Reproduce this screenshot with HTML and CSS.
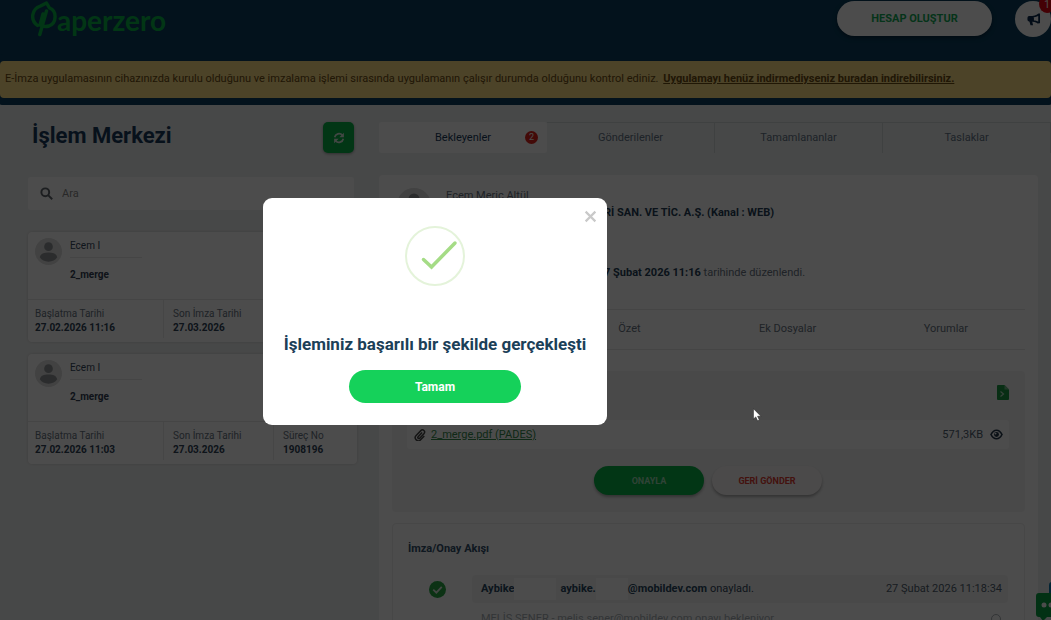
FILE: index.html
```html
<!DOCTYPE html>
<html lang="tr">
<head>
<meta charset="utf-8">
<meta name="viewport" content="width=device-width, initial-scale=1">
<title>Paperzero</title>
<link rel="stylesheet" href="styles.css">
</head>
<body>
<div class="page">
  <header class="topbar">
    <a class="logo" href="#" aria-label="Paperzero">
      <svg class="logo-mark" viewBox="0 0 26 37" aria-hidden="true">
        <path d="M6.500 25.500C-1 20 .5 9 9.500 6L15.500 3L18.500 8C26.500 11 25.500 23.500 18 26Q14.500 27 11.500 26M15.500 11L8.800 34.500M9 25L12 14"/>
      </svg>
      <span class="logo-text">aperzero</span>
    </a>
    <div class="topbar-actions">
      <button class="account-btn" type="button">HESAP OLUŞTUR</button>
      <button class="news-btn" type="button" aria-label="Duyurular">
        <svg viewBox="0 0 16 16" aria-hidden="true"><path d="M14 1.500v10.600M13.500 2.500C11 5 8 5.200 3.500 5.200a1 1 0 0 0-1 1v2a1 1 0 0 0 1 1C8 9.200 11 9.600 13.500 11.800M7.500 5v4.200" fill="none" stroke="currentColor" stroke-width="1.900"/><path d="M2.500 5h5v4.500h-1l1 4.500H4.800L3.500 9.500h-1z" fill="currentColor"/></svg>
        <span class="news-count">1</span>
      </button>
    </div>
  </header>
  <p class="notice">E-İmza uygulamasının cihazınızda kurulu olduğunu ve imzalama işlemi sırasında uygulamanın çalışır durumda olduğunu kontrol ediniz. <a href="#">Uygulamayı henüz indirmediyseniz buradan indirebilirsiniz.</a></p>

  <div class="workspace">
    <aside class="sidebar">
      <div class="sidebar-head">
        <h1>İşlem Merkezi</h1>
        <button class="refresh-btn" type="button" aria-label="Yenile">
          <svg viewBox="0 0 16 16" aria-hidden="true"><path d="M2.200 7A6 6 0 0 1 12.500 4.200M13.800 9A6 6 0 0 1 3.500 11.800" fill="none" stroke="currentColor" stroke-width="2.200"/><path d="M14.500 1v6h-6zM1.500 15V9h6z" fill="currentColor"/></svg>
        </button>
      </div>
      <label class="search">
        <svg viewBox="0 0 16 16" aria-hidden="true"><circle cx="6.500" cy="6.500" r="4.800"/><path d="M10 10l5 5"/></svg>
        <input type="text" placeholder="Ara" aria-label="Ara">
      </label>

      <article class="job">
        <div class="job-top">
          <svg class="avatar" viewBox="0 0 28 28" aria-hidden="true"><circle cx="14" cy="14" r="14" fill="#dcdcdc"/><circle cx="14" cy="9" r="4.500" fill="#909497"/><path d="M5 20c1-4 4-5 9-5s8 1 9 5c-2 3-5 4.500-9 4.500S7 23 5 20z" fill="#909497"/></svg>
          <div class="job-info"><span class="job-person">Ecem I</span><strong>2_merge</strong></div>
        </div>
        <dl class="job-meta">
          <div><dt>Başlatma Tarihi</dt><dd>27.02.2026 11:16</dd></div>
          <div><dt>Son İmza Tarihi</dt><dd>27.03.2026</dd></div>
          <div></div>
        </dl>
      </article>

      <article class="job">
        <div class="job-top">
          <svg class="avatar" viewBox="0 0 28 28" aria-hidden="true"><circle cx="14" cy="14" r="14" fill="#dcdcdc"/><circle cx="14" cy="9" r="4.500" fill="#909497"/><path d="M5 20c1-4 4-5 9-5s8 1 9 5c-2 3-5 4.500-9 4.500S7 23 5 20z" fill="#909497"/></svg>
          <div class="job-info"><span class="job-person">Ecem I</span><strong>2_merge</strong></div>
        </div>
        <dl class="job-meta">
          <div><dt>Başlatma Tarihi</dt><dd>27.02.2026 11:03</dd></div>
          <div><dt>Son İmza Tarihi</dt><dd>27.03.2026</dd></div>
          <div><dt>Süreç No</dt><dd>1908196</dd></div>
        </dl>
      </article>
    </aside>

    <main class="main">
      <nav class="tabs">
        <button class="tab tab-active" type="button">Bekleyenler<span class="tab-count">2</span></button>
        <button class="tab" type="button">Gönderilenler</button>
        <button class="tab" type="button">Tamamlananlar</button>
        <button class="tab" type="button">Taslaklar</button>
      </nav>

      <section class="panel">
        <div class="sender">
          <svg class="avatar avatar-lg" viewBox="0 0 28 28" aria-hidden="true"><circle cx="14" cy="14" r="14" fill="#dcdcdc"/><circle cx="14" cy="9" r="4.500" fill="#909497"/><path d="M5 20c1-4 4-5 9-5s8 1 9 5c-2 3-5 4.500-9 4.500S7 23 5 20z" fill="#909497"/></svg>
          <div class="sender-info">
            <p>Ecem Meriç Altül</p>
            <p class="company"><b>Rİ SAN. VE TİC. A.Ş. (Kanal : WEB)</b></p>
            <p class="issued"><b>7 Şubat 2026 11:16</b> tarihinde düzenlendi.</p>
          </div>
        </div>

        <nav class="subtabs">
          <button type="button">Özet</button>
          <button type="button">Ek Dosyalar</button>
          <button type="button">Yorumlar</button>
        </nav>

        <div class="files">
          <button class="export" type="button" aria-label="Dışa aktar">
            <svg viewBox="0 0 12 15" aria-hidden="true"><path d="M1 0h6.500L12 4.500V14a1 1 0 0 1-1 1H1a1 1 0 0 1-1-1V1a1 1 0 0 1 1-1z" fill="#1c9c45"/><path d="M7.500 0v4.500H12" fill="#77b88b"/><path d="M3.500 6.500l3 2.500-3 2.500" fill="none" stroke="#b9dfc4" stroke-width="1.200"/></svg>
          </button>
          <div class="file">
            <svg class="clip" viewBox="0 0 14 14" aria-hidden="true"><path d="M9.500 4L4.800 9a1.200 1.200 0 0 0 1.800 1.700l5-5.300A2.500 2.500 0 0 0 8 1.900L2.500 7.600a3.600 3.600 0 0 0 5.200 5L12 8.200" fill="none" stroke="currentColor" stroke-width="1.700"/></svg>
            <a href="#">2_merge.pdf (PADES)</a>
            <span class="file-size">571,3KB</span>
            <svg class="eye" viewBox="0 0 14 12" aria-hidden="true"><path d="M1 6c3-6.200 9-6.200 12 0-3 6.200-9 6.200-12 0z" fill="none" stroke="currentColor" stroke-width="1.800"/><circle cx="7" cy="6" r="2.700" fill="currentColor"/><circle cx="6" cy="5" r="1" fill="#fff"/></svg>
          </div>
          <div class="decisions">
            <button class="approve" type="button">ONAYLA</button>
            <button class="return" type="button">GERİ GÖNDER</button>
          </div>
        </div>

        <section class="flow">
          <h2>İmza/Onay Akışı</h2>
          <div class="step">
            <svg class="step-icon" viewBox="0 0 16 16" aria-hidden="true"><circle cx="8" cy="8" r="8" fill="#28a745"/><path d="M4 8.200l2.900 2.800L12 5.600" fill="none" stroke="#dfe9df" stroke-width="1.700"/></svg>
            <div class="step-row">
              <b>Aybike</b><span class="mask mask-lg"></span><b>aybike.</b><span class="mask"></span><b>@mobildev.com</b><span class="step-state">onayladı.</span>
              <time>27 Şubat 2026 11:18:34</time>
            </div>
          </div>
          <div class="step step-waiting">
            <span class="step-icon"></span>
            <div class="step-row"><span>MELİS ŞENER - melis.sener@mobildev.com onayı bekleniyor.</span>
              <svg class="clock" viewBox="0 0 12 12" aria-hidden="true"><circle cx="6" cy="6" r="4.500"/></svg>
            </div>
          </div>
        </section>
      </section>
    </main>
  </div>

  <button class="chat" type="button" aria-label="Sohbet"><span class="chat-back"></span><svg viewBox="0 0 30 28" aria-hidden="true"><path d="M3 0h27v24H11l-4 4-3-4H3a3 3 0 0 1-3-3V3a3 3 0 0 1 3-3z" fill="#08a344"/><circle cx="8" cy="12" r="2.500" fill="#fff"/><circle cx="15" cy="12" r="2.500" fill="#fff"/></svg></button>
</div>

<div class="backdrop"></div>
<div class="modal" role="dialog" aria-modal="true" aria-labelledby="modal-title">
  <button class="modal-close" type="button" aria-label="Kapat"><svg viewBox="0 0 12 12" aria-hidden="true"><path d="M1.500 1.500l9 9M10.500 1.500l-9 9"/></svg></button>
  <svg class="modal-check" viewBox="0 0 60 60" aria-hidden="true"><circle cx="30" cy="30" r="29" fill="none" stroke="#e4f3da" stroke-width="2"/><path d="M18.500 33.500l8 7.500L50 17" fill="none" stroke="#a5dc86" stroke-width="3.500" stroke-linecap="round"/></svg>
  <h2 id="modal-title">İşleminiz başarılı bir şekilde gerçekleşti</h2>
  <button class="modal-ok" type="button">Tamam</button>
</div>
<svg class="pointer" viewBox="0 0 10 15" aria-hidden="true"><path d="M.5.500v11.500l2.600-2.400 2 4.400 2-.9-2-4.200h3.700z" fill="#fff" stroke="#222" stroke-width=".6"/></svg>
</body>
</html>
```
FILE: styles.css
```css
* { box-sizing: border-box; }

body {
  margin: 0;
  height: 100vh;
  overflow: hidden;
  background: #eff2f2;
  color: #33475b;
  font: 11px/16px Roboto, "Liberation Sans", sans-serif;
}

h1, h2, p, dl, dd { margin: 0; }
a { color: inherit; }
svg { display: block; flex: none; }

button {
  padding: 0;
  border: 0;
  background: none;
  color: inherit;
  font: inherit;
}

.page {
  position: relative;
  height: 100vh;
  overflow: hidden;
}

/* Header */
.topbar {
  display: flex;
  justify-content: space-between;
  align-items: flex-start;
  height: 61px;
  padding-left: 31px;
  background: #0a3f5e;
}

.logo {
  display: flex;
  align-items: flex-start;
  color: #07b548;
  text-decoration: none;
}

.logo-mark {
  width: 26px;
  height: 37px;
  fill: none;
  stroke: currentColor;
  stroke-width: 3.4;
  stroke-linejoin: round;
  stroke-linecap: round;
}

.logo-text { font: bold 28px/40px Lato, sans-serif; }

.topbar-actions {
  display: flex;
  gap: 23px;
  padding-top: 1px;
}

.account-btn {
  width: 155px;
  height: 35px;
  border-radius: 18px;
  background: #fff;
  color: #12ae57;
  font-weight: 700;
  box-shadow: 0 2px 4px #06253c;
}

.news-btn {
  position: relative;
  display: grid;
  place-items: center;
  width: 36px;
  height: 36px;
  border-radius: 50%;
  background: #fff;
  color: #0b2b4e;
}

.news-btn svg { width: 15px; height: 15px; }

.news-count {
  position: absolute;
  top: -6px;
  right: -4px;
  width: 16px;
  height: 18px;
  border-radius: 50%;
  background: #e30613;
  color: #fff;
  font-size: 10px;
  line-height: 20px;
}

.notice {
  padding: 10px 5px 11px;
  border-radius: 4px;
  background: #ffdf88;
  color: #6b4d12;
  box-shadow: 0 0 0 7px #0a3f5e;
}

.notice a { margin-left: 2px; font-weight: 700; }

/* Two column workspace */
.workspace {
  display: grid;
  grid-template-columns: 329px minmax(0, 1fr);
  gap: 22px;
  padding: 24px 0 0 28px;
}

.sidebar-head {
  display: flex;
  justify-content: space-between;
  align-items: center;
  height: 31px;
  padding: 0 3px 0 4px;
}

.sidebar-head h1 {
  color: #183a5c;
  font-size: 22px;
  line-height: 26px;
  padding-bottom: 4px;
}

.refresh-btn {
  display: grid;
  place-items: center;
  width: 31px;
  height: 31px;
  border-radius: 5px;
  background: #07b548;
  color: #e0eee4;
  box-shadow: 0 1px 3px #999;
}

.refresh-btn svg { width: 12px; height: 12px; }

.search {
  display: flex;
  align-items: center;
  gap: 7px;
  height: 33px;
  margin: 24px 3px 22px 0;
  padding: 0 12px;
  border-radius: 3px;
  background: #fff;
}

.search svg {
  width: 13px;
  height: 13px;
  fill: none;
  stroke: #60666c;
  stroke-width: 2.4;
}

.search input {
  flex: 1;
  min-width: 0;
  border: 0;
  outline: 0;
  background: none;
  font: inherit;
}

.search input::placeholder { color: #888; opacity: 1; }

.job {
  margin-bottom: 12px;
  border-radius: 4px;
  background: #fff;
  box-shadow: 0 0 3px #ccc;
}

.job-top {
  display: flex;
  gap: 8px;
  height: 67px;
  padding: 6px 7px;
}

.avatar { width: 27px; height: 27px; }

.job-info {
  display: flex;
  flex-direction: column;
  gap: 9px;
  font-size: 10px;
}

.job-info strong { color: #344255; }

.job-person {
  width: 72px;
  height: 20px;
  border-bottom: 1px solid #e8e8e8;
}

.job-meta {
  display: grid;
  grid-template-columns: 135px 110px 1fr;
  padding-bottom: 4px;
  border-top: 1px solid #e8e8e8;
  font-size: 10px;
  line-height: 14px;
}

.job-meta div { padding: 7px 0 3px 7px; }
.job-meta div + div { padding-left: 9px; border-left: 1px solid #ececec; }
.job-meta dt { color: #687482; }
.job-meta dd { color: #2f4358; font-weight: 700; }

/* Main column */
.tabs {
  display: grid;
  grid-template-columns: repeat(4, 1fr);
  height: 31px;
}

.tab {
  position: relative;
  border: 1px solid #d4d9d9;
  border-width: 1px 1px 0 0;
  color: #657585;
}

.tab-active {
  border: 0;
  border-radius: 3px;
  background: #fff;
  color: #183a5c;
}

.tab-count {
  position: absolute;
  top: 9px;
  right: 9px;
  width: 13px;
  height: 13px;
  border-radius: 50%;
  background: #e0241d;
  color: #fff;
  font-size: 9px;
  line-height: 13px;
}

.panel {
  margin: 22px 13px 0 0;
  padding: 13px 13px 0;
  border-radius: 4px;
  background: #fff;
}

.sender {
  display: flex;
  gap: 15px;
  min-height: 121px;
  padding-left: 5px;
}

.avatar-lg { width: 34px; height: 34px; }
.sender-info { color: #687482; }
.sender-info b { color: #263f58; }
.company, .issued { padding-left: 158px; }
.company { padding-top: 1px; }
.issued { padding-top: 44px; }

.subtabs {
  display: grid;
  grid-template-columns: repeat(4, 1fr);
  height: 41px;
  margin-bottom: 21px;
  padding-bottom: 2px;
  border: 1px solid #e6e6e6;
  border-width: 1px 0;
  color: #687482;
}

.subtabs button:first-child { grid-column: 2; }

.files {
  padding: 14px 16px 17px 15px;
  border-radius: 4px;
  background: #f5f5f5;
}

.export {
  display: block;
  margin-left: auto;
}

.export svg { width: 12px; height: 15px; }

.file {
  display: flex;
  align-items: center;
  height: 29px;
  margin: 20px 0 17px;
  padding: 0 6px 0 7px;
  border-radius: 3px;
  background: #fff;
  color: #51606f;
}

.file a { margin-left: 5px; color: #348a4b; }
.clip { width: 12px; height: 12px; color: #444; }
.eye { width: 13px; height: 11px; color: #22384c; }
.file-size { margin: 0 7px 0 auto; }

.decisions {
  display: flex;
  justify-content: center;
  gap: 8px;
}

.decisions button {
  width: 110px;
  height: 29px;
  border-radius: 15px;
  font-size: 9px;
  font-weight: 700;
  box-shadow: 0 2px 3px #aaa;
}

.decisions .approve { background: #07b548; color: #a2dfb7; }
.decisions .return { background: #fbf7f7; color: #e33c32; }

.flow {
  margin-top: 11px;
  padding: 17px 16px 0 15px;
  border: 1px solid #eee;
  border-radius: 4px;
}

.flow h2 {
  margin-bottom: 18px;
  color: #33506b;
  font-size: 11px;
  line-height: 16px;
}

.step {
  display: flex;
  align-items: center;
  gap: 26px;
  padding-left: 21px;
}

.step-icon { width: 17px; height: 17px; }

.step-row {
  flex: 1;
  display: flex;
  align-items: center;
  height: 28px;
  padding: 0 6px 0 9px;
  border-radius: 4px;
  background: #f6f6f6;
}

.step-row b { color: #294861; }
.step-state { margin-left: 3px; }
.mask { width: 32px; height: 22px; background: #fff; }
.mask-lg { width: 42px; margin-right: 4px; }
.step-row time { margin-left: auto; color: #4f5f6e; }

.step-waiting .step-row { margin-top: 2px; background: none; color: #a9b0b6; }
.clock { width: 12px; height: 12px; margin-left: auto; fill: none; stroke: #a9b0b6; }

.chat {
  position: absolute;
  right: -15px;
  bottom: -1px;
  width: 30px;
  height: 28px;
}

.chat-back {
  position: absolute;
  left: 13px;
  top: -11px;
  width: 17px;
  height: 20px;
  border-radius: 3px;
  background: #087ab0;
}

.chat svg { position: relative; }

/* Dialog */
.backdrop {
  position: fixed;
  inset: 0;
  background: rgba(0, 0, 0, 0.7);
}

.modal {
  position: absolute;
  left: 263px;
  top: 198px;
  display: flex;
  flex-direction: column;
  align-items: center;
  width: 344px;
  padding: 28px 20px 22px;
  border-radius: 9px;
  background: #fff;
}

.modal-close {
  position: absolute;
  top: 12px;
  right: 10px;
}

.modal-close svg {
  width: 13px;
  height: 13px;
  stroke: #c9c9c9;
  stroke-width: 2;
}

.modal-check { width: 60px; height: 60px; }

.modal h2 {
  margin: 46px 0 14px;
  color: #1b4058;
  font-size: 17px;
  line-height: 24px;
  white-space: nowrap;
}

.modal-ok {
  width: 172px;
  height: 33px;
  border-radius: 17px;
  background: #15d15a;
  color: #fff;
  font-size: 12px;
  font-weight: 700;
}

.pointer {
  position: absolute;
  left: 753px;
  top: 408px;
  width: 9px;
  height: 14px;
}
```
